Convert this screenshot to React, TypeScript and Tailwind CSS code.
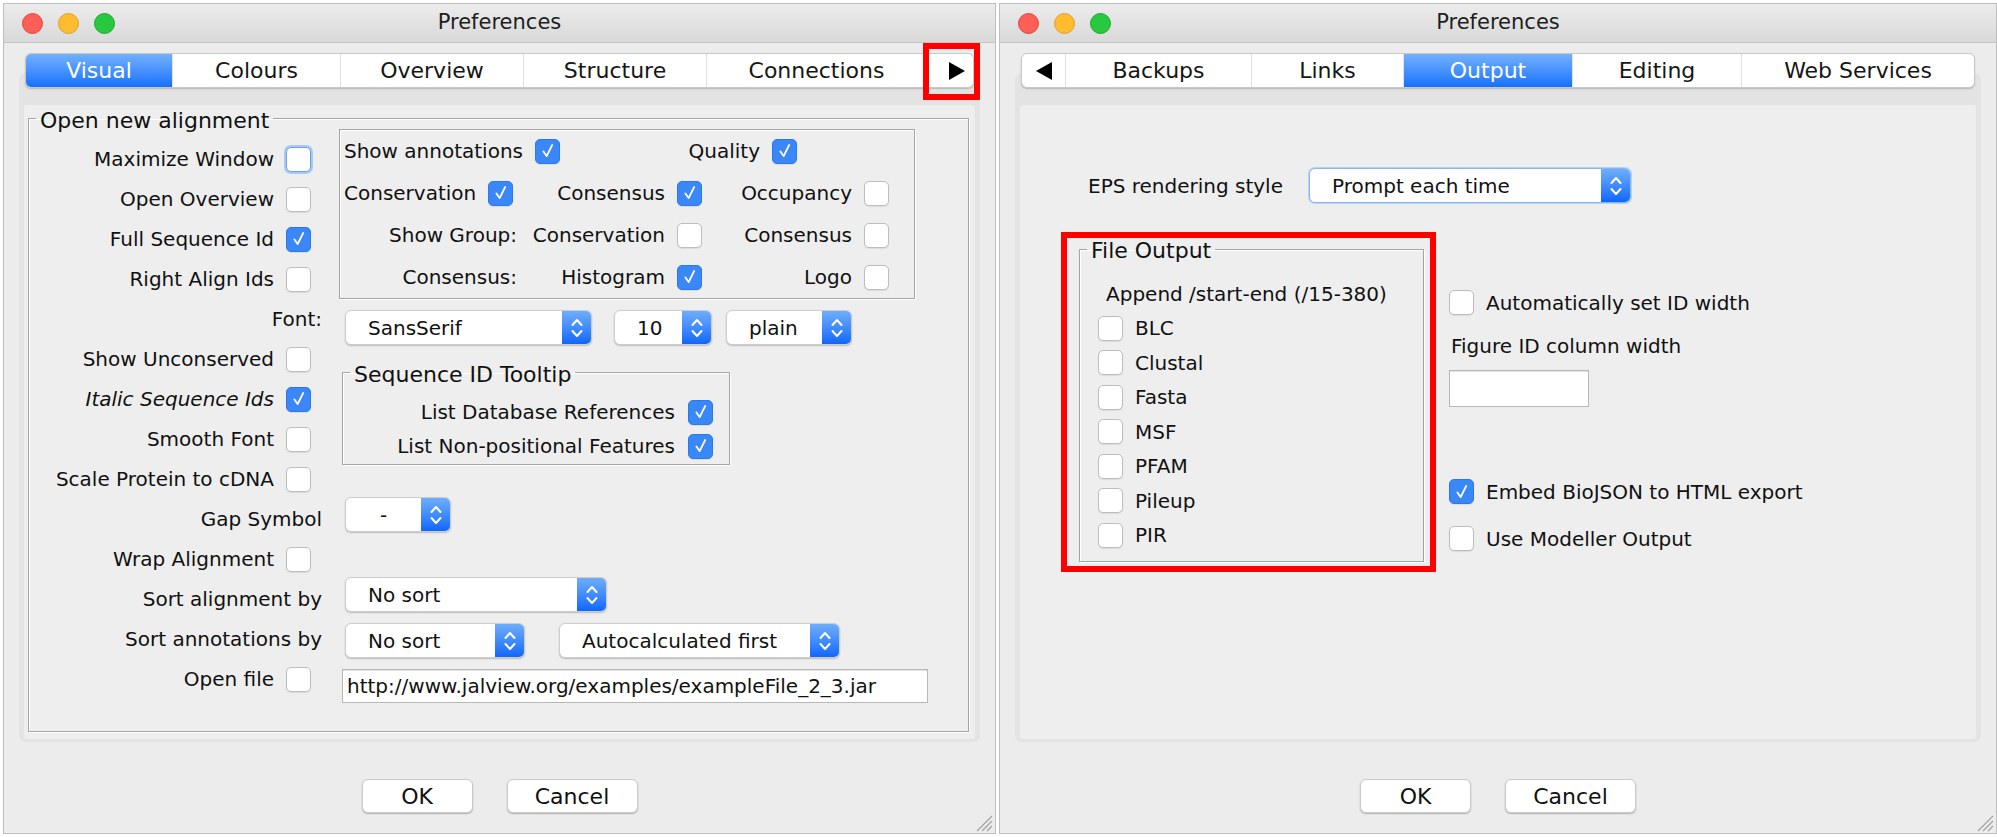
import clsx from "clsx";
import type { ReactNode } from "react";

function Check({ checked = false, focus = false }: { checked?: boolean; focus?: boolean }) {
    return (
        <span
            className={clsx(
                "inline-flex h-[25px] w-[25px] shrink-0 items-center justify-center rounded-[5px] border",
                checked && "border-[#2d78ee] bg-[#3a88f7] shadow-[0_1px_1px_rgba(0,0,0,0.08)]",
                !checked && !focus && "border-[#bdbdbd] bg-white shadow-[0_1px_1px_rgba(0,0,0,0.08)]",
                !checked && focus && "border-[#6d9fe9] bg-white shadow-[0_0_0_2px_#a9c9f5]"
            )}
        >
            {checked && (
                <svg viewBox="0 0 24 24" className="h-[22px] w-[22px]">
                    <path d="M7 12.5 L10.5 17.5 L16.5 5.5" fill="none" stroke="#fff" strokeWidth="2" strokeLinecap="round" strokeLinejoin="round" />
                </svg>
            )}
        </span>
    );
}

function Select({ className, label, center = false, focus = false }: { className: string; label: string; center?: boolean; focus?: boolean }) {
    return (
        <div
            className={clsx(
                "flex h-[35px] shrink-0 overflow-hidden rounded-[6px] border bg-white",
                focus ? "border-[#8ab6f2] shadow-[0_0_0_1px_#b7d2f7]" : "border-[#cdcdcd] shadow-[0_1px_1.5px_rgba(0,0,0,0.22)]",
                className
            )}
        >
            <div className={clsx("flex flex-1 items-center text-[20px]", center ? "justify-center" : "pl-[22px]")}>{label}</div>
            <div className="flex w-[29px] items-center justify-center bg-linear-to-b from-[#6fadfb] to-[#0d66fe]">
                <svg viewBox="0 0 16 26" className="h-[26px] w-[16px]">
                    <path d="M3.5 10 L8 5 L12.5 10" fill="none" stroke="#fff" strokeWidth="2" strokeLinecap="round" strokeLinejoin="round" />
                    <path d="M3.5 16 L8 21 L12.5 16" fill="none" stroke="#fff" strokeWidth="2" strokeLinecap="round" strokeLinejoin="round" />
                </svg>
            </div>
        </div>
    );
}

function TextBox({ className, value = "" }: { className: string; value?: string }) {
    return (
        <div className={clsx("flex items-center border border-[#b7b7b7] bg-white pl-[4px] text-[20px] shadow-[inset_0_1px_0_#e2e2e2]", className)}>
            {value}
        </div>
    );
}

function Legend({ children, className }: { children: ReactNode; className?: string }) {
    return <legend className={clsx("ml-[7px] px-[4px] text-[22px] leading-[20px]", className)}>{children}</legend>;
}

function TitleBar() {
    return (
        <div className="relative flex h-[39px] shrink-0 items-center border-b border-[#c4c4c4] bg-linear-to-b from-[#ececec] to-[#d9d9d9] pl-[18px]">
            <div className="flex gap-[15px]">
                <span className="h-[21px] w-[21px] rounded-full border border-[#e0443e] bg-[#fd5f57]" />
                <span className="h-[21px] w-[21px] rounded-full border border-[#dea123] bg-[#febc2e]" />
                <span className="h-[21px] w-[21px] rounded-full border border-[#1aab29] bg-[#28c840]" />
            </div>
            <div className="absolute inset-x-0 top-0 flex h-full items-center justify-center text-[21px] text-[#1e1e1e]">Preferences</div>
        </div>
    );
}

type Tab = { label: ReactNode; w: string; selected?: boolean };

function TabBar({ tabs, children }: { tabs: Tab[]; children?: ReactNode }) {
    return (
        <div className="relative z-10 mx-[6px] h-[35px]">
            <div className="flex h-full overflow-hidden rounded-[6px] border border-[#c8c8c8] bg-white shadow-[0_1px_1.5px_rgba(0,0,0,0.2)]">
                {tabs.map((t, i) => (
                    <div
                        key={i}
                        className={clsx(
                            "flex h-full items-center justify-center text-[22px]",
                            t.w,
                            i > 0 && "border-l border-[#e0e0e0]",
                            t.selected ? "bg-linear-to-b from-[#72b0fb] to-[#1170fe] text-white" : "text-[#161616]"
                        )}
                    >
                        {t.label}
                    </div>
                ))}
            </div>
            {children}
        </div>
    );
}

function Buttons() {
    return (
        <div className="mt-[37px] flex justify-center gap-[34px]">
            <div className="flex h-[34px] w-[111px] items-center justify-center rounded-[6px] border border-[#cacaca] bg-white text-[22px] shadow-[0_1px_1.5px_rgba(0,0,0,0.25)]">OK</div>
            <div className="flex h-[34px] w-[131px] items-center justify-center rounded-[6px] border border-[#cacaca] bg-white text-[22px] shadow-[0_1px_1.5px_rgba(0,0,0,0.25)]">Cancel</div>
        </div>
    );
}

function Grip() {
    return (
        <svg viewBox="0 0 18 18" className="absolute bottom-[1px] right-[2px] h-[18px] w-[18px]">
            <path d="M2 17 L17 2 M7 17 L17 7 M12 17 L17 12" stroke="#a2a2a2" strokeWidth="1.2" />
        </svg>
    );
}

function Window({ className, tabs, overlay, children }: { className: string; tabs: Tab[]; overlay?: ReactNode; children: ReactNode }) {
    return (
        <div className={clsx("relative flex h-[831px] shrink-0 flex-col border border-[#bebebe] bg-[#ececec]", className)}>
            <TitleBar />
            <div className="mx-[15px] mt-[10px] flex flex-col">
                <TabBar tabs={tabs}>{overlay}</TabBar>
                <div className="-mt-[15px] flex h-[669px] flex-col rounded-[7px] bg-[#e3e3e3] px-[5px] pb-[3px] pt-[32px]">
                    <div className="flex flex-1 flex-col rounded-[2px] bg-[#eeeeee]">{children}</div>
                </div>
            </div>
            <Buttons />
            <Grip />
        </div>
    );
}

const etched = "border border-[#a5a5a5] shadow-[inset_1px_1px_0_#fff,1px_1px_0_#fff]";

const leftRows: { label: string; cb?: boolean; checked?: boolean; focus?: boolean; italic?: boolean }[] = [
    { label: "Maximize Window", cb: true, focus: true },
    { label: "Open Overview", cb: true },
    { label: "Full Sequence Id", cb: true, checked: true },
    { label: "Right Align Ids", cb: true },
    { label: "Font:" },
    { label: "Show Unconserved", cb: true },
    { label: "Italic Sequence Ids", cb: true, checked: true, italic: true },
    { label: "Smooth Font", cb: true },
    { label: "Scale Protein to cDNA", cb: true },
    { label: "Gap Symbol" },
    { label: "Wrap Alignment", cb: true },
    { label: "Sort alignment by" },
    { label: "Sort annotations by" },
    { label: "Open file", cb: true },
];

function Pair({ label, checked = false }: { label: string; checked?: boolean }) {
    return (
        <div className="flex items-center gap-[12px]">
            <span>{label}</span>
            <Check checked={checked} />
        </div>
    );
}

function VisualPanel() {
    return (
        <fieldset className={clsx("mb-[7px] ml-[4px] mr-[6px] flex-1", etched)}>
            <Legend className="pt-[6px]">Open new alignment</Legend>
            <div className="flex">
                <div className="mt-[8px] flex w-[294px] flex-col">
                    {leftRows.map((r) => (
                        <div key={r.label} className={clsx("flex h-[40px] items-center justify-end gap-[12px]", r.cb ? "pr-[12px]" : "pr-px")}>
                            <span className={clsx(r.italic && "italic")}>{r.label}</span>
                            {r.cb && <Check checked={r.checked} focus={r.focus} />}
                        </div>
                    ))}
                </div>

                <div className="-mt-[2px] ml-[16px] flex flex-col">
                    <div className={clsx("h-[170px] w-[576px]", etched)}>
                        <div className="flex h-[42px] items-center pl-[4px]">
                            <Pair label="Show annotations" checked />
                            <div className="ml-auto mr-[117px]">
                                <Pair label="Quality" checked />
                            </div>
                        </div>
                        {[
                            [<div className="pl-[4px]"><Pair label="Conservation" checked /></div>, <Pair label="Consensus" checked />, <Pair label="Occupancy" />],
                            [<div className="flex justify-end">Show Group:</div>, <Pair label="Conservation" />, <Pair label="Consensus" />],
                            [<div className="flex justify-end">Consensus:</div>, <Pair label="Histogram" checked />, <Pair label="Logo" />],
                        ].map((row, i) => (
                            <div key={i} className="flex h-[42px] items-center">
                                <div className="w-[177px]">{row[0]}</div>
                                <div className="flex w-[185px] justify-end">{row[1]}</div>
                                <div className="flex w-[187px] justify-end">{row[2]}</div>
                            </div>
                        ))}
                    </div>

                    <div className="ml-[6px] mt-[11px] flex items-center">
                        <Select className="w-[247px]" label="SansSerif" />
                        <Select className="ml-[22px] w-[98px]" label="10" />
                        <Select className="ml-[14px] w-[126px]" label="plain" />
                    </div>

                    <fieldset className={clsx("ml-[3px] mt-[14px] w-[388px]", etched)}>
                        <Legend className="pt-[6px]">Sequence ID Tooltip</Legend>
                        <div className="flex flex-col pb-px pr-[16px] pt-[10px]">
                            <div className="flex h-[34px] items-center justify-end gap-[13px]">
                                <span>List Database References</span>
                                <Check checked />
                            </div>
                            <div className="flex h-[34px] items-center justify-end gap-[13px]">
                                <span>List Non-positional Features</span>
                                <Check checked />
                            </div>
                        </div>
                    </fieldset>

                    <Select className="ml-[6px] mt-[32px] w-[106px]" label="-" center />
                    <Select className="ml-[6px] mt-[45px] w-[262px]" label="No sort" />
                    <div className="ml-[6px] mt-[11px] flex">
                        <Select className="w-[180px]" label="No sort" />
                        <Select className="ml-[34px] w-[281px]" label="Autocalculated first" />
                    </div>
                    <TextBox className="ml-[3px] mt-[11px] h-[34px] w-[586px]" value="http://www.jalview.org/examples/exampleFile_2_3.jar" />
                </div>
            </div>
        </fieldset>
    );
}

function OutputPanel() {
    const formats = ["BLC", "Clustal", "Fasta", "MSF", "PFAM", "Pileup", "PIR"];
    return (
        <>
            <div className="ml-[68px] mt-[63px] flex h-[35px] items-center">
                <div className="w-[221px]">EPS rendering style</div>
                <Select className="w-[322px]" label="Prompt each time" focus />
            </div>
            <div className="ml-[41px] mt-[29px] flex items-start">
                <div className="flex h-[340px] w-[375px] flex-col border-[6px] border-[#ff0000] pb-[4px] pl-[12px] pr-[6px]">
                    <fieldset className={clsx("flex-1", etched)}>
                        <Legend className="pt-[3px]">File Output</Legend>
                        <div className="flex flex-col pt-[15px]">
                            <div className="flex h-[35px] items-center pl-[26px]">Append /start-end (/15-380)</div>
                            {formats.map((f) => (
                                <div key={f} className="flex h-[34.5px] items-center gap-[12px] pl-[18px]">
                                    <Check />
                                    <span>{f}</span>
                                </div>
                            ))}
                        </div>
                    </fieldset>
                </div>
                <div className="ml-[13px] mt-[58px] flex flex-col">
                    <div className="flex h-[25px] items-center gap-[12px]">
                        <Check />
                        <span>Automatically set ID width</span>
                    </div>
                    <div className="ml-[2px] mt-[19px] leading-[24px]">Figure ID column width</div>
                    <TextBox className="mt-[12px] h-[37px] w-[140px]" />
                    <div className="mt-[72px] flex h-[25px] items-center gap-[12px]">
                        <Check checked />
                        <span>Embed BioJSON to HTML export</span>
                    </div>
                    <div className="mt-[22px] flex h-[25px] items-center gap-[12px]">
                        <Check />
                        <span>Use Modeller Output</span>
                    </div>
                </div>
            </div>
        </>
    );
}

function Arrow({ dir }: { dir: "left" | "right" }) {
    return (
        <svg viewBox="0 0 16 18" className="h-[18px] w-[16px]">
            <polygon points={dir === "right" ? "0,0 16,9 0,18" : "16,0 0,9 16,18"} fill="#000" />
        </svg>
    );
}

export default function App() {
    const leftTabs: Tab[] = [
        { label: "Visual", w: "w-[146px]", selected: true },
        { label: "Colours", w: "w-[168px]" },
        { label: "Overview", w: "w-[183px]" },
        { label: "Structure", w: "w-[183px]" },
        { label: "Connections", w: "w-[220px]" },
        { label: <span className="ml-[14px] flex"><Arrow dir="right" /></span>, w: "flex-1" },
    ];
    const rightTabs: Tab[] = [
        { label: <Arrow dir="left" />, w: "w-[43px]" },
        { label: "Backups", w: "w-[186px]" },
        { label: "Links", w: "w-[152px]" },
        { label: "Output", w: "w-[169px]", selected: true },
        { label: "Editing", w: "w-[169px]" },
        { label: "Web Services", w: "flex-1" },
    ];

    return (
        <div className="flex h-[837px] w-[1997px] gap-[3px] overflow-hidden bg-white pl-[3px] pt-[3px] font-['DejaVu_Sans',sans-serif] text-[20px] text-[#111]">
            <Window
                className="w-[993px]"
                tabs={leftTabs}
                overlay={<div className="absolute -top-[10px] left-[898px] h-[57px] w-[57px] border-[6px] border-[#ff0000]" />}
            >
                <VisualPanel />
            </Window>
            <Window className="w-[998px]" tabs={rightTabs}>
                <OutputPanel />
            </Window>
        </div>
    );
}
